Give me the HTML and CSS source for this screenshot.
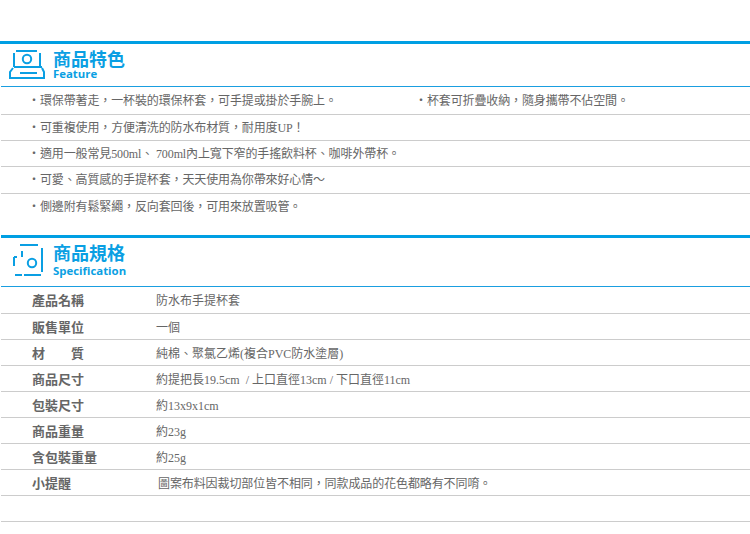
FILE: index.html
```html
<!DOCTYPE html>
<html lang="zh-Hant">
<head>
<meta charset="utf-8">
<title>商品資訊</title>
<link rel="stylesheet" href="styles.css">
</head>
<body>
<section class="block block-feature">
  <header class="head">
    <svg class="icon" width="38" height="32" viewBox="0 0 38 32" fill="none" stroke="#0a9fe3" stroke-width="2"><path d="M7 3H28M5 5V19M31 5V19M5 19H33M4 20L1 24V30H35V24L33 20M11 25H28"/><circle cx="18" cy="11" r="4.2"/></svg>
    <div class="titles"><h2>商品特色</h2><p>Feature</p></div>
  </header>
  <ul class="features">
    <li class="two"><span>‧環保帶著走，一杯裝的環保杯套，可手提或掛於手腕上。</span><span>‧杯套可折疊收納，隨身攜帶不佔空間。</span></li>
    <li>‧可重複使用，方便清洗的防水布材質，耐用度UP！</li>
    <li>‧適用一般常見500ml、 700ml內上寬下窄的手搖飲料杯、咖啡外帶杯。</li>
    <li>‧可愛、高質感的手提杯套，天天使用為你帶來好心情～</li>
    <li>‧側邊附有鬆緊繩，反向套回後，可用來放置吸管。</li>
  </ul>
</section>
<section class="block block-spec">
  <header class="head">
    <svg class="icon" width="38" height="32" viewBox="0 0 38 32" fill="none" stroke="#0a9fe3" stroke-width="2"><path d="M11 3H29M33 6V30M6 33H13M15 33H32M5 15V24M5 15H8M13 9V15"/><circle cx="23" cy="21" r="4.2"/></svg>
    <div class="titles"><h2>商品規格</h2><p>Specification</p></div>
  </header>
  <dl class="specs">
    <div class="row"><dt>產品名稱</dt><dd>防水布手提杯套</dd></div>
    <div class="row"><dt>販售單位</dt><dd>一個</dd></div>
    <div class="row"><dt>材　　質</dt><dd>純棉、聚氯乙烯(複合PVC防水塗層)</dd></div>
    <div class="row"><dt>商品尺寸</dt><dd>約提把長19.5cm &nbsp;/ 上口直徑13cm / 下口直徑11cm</dd></div>
    <div class="row"><dt>包裝尺寸</dt><dd>約13x9x1cm</dd></div>
    <div class="row"><dt>商品重量</dt><dd>約23g</dd></div>
    <div class="row"><dt>含包裝重量</dt><dd>約25g</dd></div>
    <div class="row"><dt>小提醒</dt><dd class="tight">圖案布料因裁切部位皆不相同，同款成品的花色都略有不同唷。</dd></div>
    <div class="row"><dt></dt><dd></dd></div>
  </dl>
</section>
</body>
</html>
```
FILE: styles.css
```css
html, body { margin: 0; padding: 0; background: #fff; }
body {
  width: 750px;
  height: 534px;
  overflow: hidden;
  font-family: "Liberation Serif", "Noto Sans CJK TC", serif;
  font-size: 12px;
  color: #666;
}
.block { border-top: 3px solid #009fe3; }
.block-feature { margin-top: 41px; }
.block-spec { margin-top: 16px; margin-left: 1px; }
.head {
  display: flex;
  align-items: flex-start;
  gap: 6px;
  height: 42px;
  padding-left: 8px;
  margin-left: 1px;
  border-bottom: 1px solid #1a9ee0;
}
.block-spec .head { height: 48px; margin-left: 0; }
.icon { margin-top: 4px; flex: none; overflow: visible; }
.titles { color: #0a9fe3; font-family: "Noto Sans CJK TC", sans-serif; font-weight: 700; }
.titles h2 { margin: 0; font-size: 18px; line-height: 18px; font-weight: 700; padding-top: 5px; }
.titles p { margin: 0; font-family: "Open Sans", sans-serif; font-size: 11.4px; line-height: 14px; font-weight: 700; }
.block-spec .titles p { margin-top: 3px; }
.features { list-style: none; margin: 0 0 0 1px; padding: 0; letter-spacing: -0.12px; }
.features li { height: 25.4px; line-height: 26px; padding-left: 27px; border-bottom: 1px solid #ccc; }
.features li:first-child { height: 26.6px; line-height: 29px; }
.features li:last-child { border-bottom: 0; }
.features .two { display: grid; grid-template-columns: 387px 1fr; }
.specs { margin: 0; }
.row { display: flex; height: 25px; line-height: 27px; border-bottom: 1px solid #ccc; }
.row:first-child { height: 26px; }
.row dt { width: 124px; padding-left: 31px; flex: none; font-weight: 700; font-size: 13px; color: #666; }
.row dd { margin: 0; padding-top: 1px; }
.row .tight { letter-spacing: -0.1px; padding-left: 2px; }
```
